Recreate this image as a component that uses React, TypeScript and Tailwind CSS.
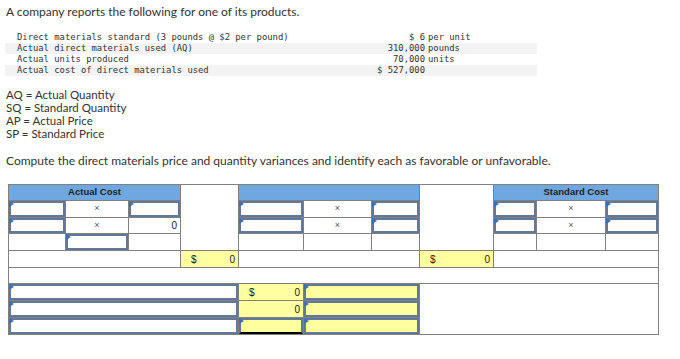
const BORDER = "border-r border-b border-[#808080]";

const Tri = () => (
  <span className="absolute left-0 top-0 w-0 h-0 border-t-[3px] border-b-[3px] border-l-[5px] border-t-transparent border-b-transparent border-l-[#3c6fb4]" />
);

const Input = ({ yellow = false, bottom = false }: { yellow?: boolean; bottom?: boolean }) => (
  <div className={`relative ${BORDER} ${yellow ? "bg-[#ffff9f]" : "bg-white"}`}>
    <div
      className={`absolute inset-0 border-2 border-[#62789a] ${bottom ? "border-b-black" : ""}`}
    />
    <Tri />
  </div>
);

const Cell = ({
  children,
  className = "",
}: {
  children?: React.ReactNode;
  className?: string;
}) => <div className={`${BORDER} flex items-center ${className}`}>{children}</div>;

const X = () => <Cell className="justify-center text-[9px] text-[#555]">×</Cell>;

const rows = [
  { label: "Direct materials standard (3 pounds @ $2 per pound)", value: "$ 6", unit: "per unit" },
  { label: "Actual direct materials used (AQ)", value: "310,000", unit: "pounds" },
  { label: "Actual units produced", value: "70,000", unit: "units" },
  { label: "Actual cost of direct materials used", value: "$ 527,000", unit: "" },
];

export default function App() {
  return (
    <div className="w-[680px] h-[359px] bg-white text-[#333] font-['Lato',sans-serif] overflow-hidden">
      <p className="pl-[6px] pt-[4px] text-[12px] leading-[15px]">
        A company reports the following for one of its products.
      </p>

      <div className="mt-[13px] ml-[5px] w-[532px] font-['DejaVu_Sans_Mono',monospace] text-[8.85px] text-[#333]">
        {rows.map((r, i) => (
          <div
            key={i}
            className={`flex h-[11px] items-center ${i % 2 === 1 ? "bg-[#f3f3f3]" : ""}`}
          >
            <span className="pl-[12px] w-[360px] whitespace-pre">{r.label}</span>
            <span className="w-[60px] text-right whitespace-pre">{r.value}</span>
            <span className="pl-[3px] whitespace-pre">{r.unit}</span>
          </div>
        ))}
      </div>

      <div className="mt-[12px] pl-[6px] text-[11.5px] leading-[13px]">
        <div>AQ = Actual Quantity</div>
        <div>SQ = Standard Quantity</div>
        <div>AP = Actual Price</div>
        <div>SP = Standard Price</div>
      </div>

      <p className="mt-[14px] pl-[6px] text-[12px] leading-[13px]">
        Compute the direct materials price and quantity variances and identify each as favorable or unfavorable.
      </p>

      <div className="ml-[8px] mt-[17px] grid grid-cols-[57px_63px_52px_58px_65px_68px_48px_74px_43px_69px_53px] grid-rows-[16px_17px_16px_17px_17px_16px_17px_17px_17px] border-l border-t border-[#808080] w-[651px] font-['Liberation_Sans',sans-serif] text-[9px] text-[#222]">
        {/* header */}
        <Cell className="col-span-3 justify-center bg-[#6fa8e0] font-bold text-[9.5px]">Actual Cost</Cell>
        <Cell className="row-span-4" />
        <Cell className="col-span-3 bg-[#6fa8e0]" />
        <Cell className="row-span-4" />
        <Cell className="col-span-3 justify-center bg-[#6fa8e0] font-bold text-[9.5px]">Standard Cost</Cell>

        {/* row 1 */}
        <Input />
        <X />
        <Input />
        <Input />
        <X />
        <Input />
        <Input />
        <X />
        <Input />

        {/* row 2 */}
        <Input />
        <X />
        <Cell className="justify-end pr-[3px] text-[10px]">0</Cell>
        <Input />
        <X />
        <Input />
        <Input />
        <X />
        <Input />

        {/* row 3 */}
        <Cell />
        <Input />
        <Cell />
        <Cell />
        <Cell />
        <Cell />
        <Cell />
        <Cell />
        <Cell />

        {/* totals */}
        <Cell className="col-span-3" />
        <Cell className="bg-[#ffff9f] justify-between pl-[10px] pr-[3px] text-[10px]">
          <span>$</span>
          <span>0</span>
        </Cell>
        <Cell className="col-span-3" />
        <Cell className="bg-[#ffff9f] justify-between pl-[10px] pr-[3px] text-[10px]">
          <span>$</span>
          <span>0</span>
        </Cell>
        <Cell className="col-span-3" />

        {/* spacer */}
        <Cell className="col-span-11" />

        {/* variance rows */}
        <div className="col-span-4 grid">
          <Input />
        </div>
        <Cell className="bg-[#ffff9f] justify-between pl-[10px] pr-[3px] text-[10px]">
          <span>$</span>
          <span>0</span>
        </Cell>
        <div className="col-span-2 grid">
          <Input yellow />
        </div>
        <Cell className="col-span-4 row-span-3" />

        <div className="col-span-4 grid">
          <Input />
        </div>
        <Cell className="bg-[#ffff9f] justify-end pr-[3px] text-[10px]">0</Cell>
        <div className="col-span-2 grid">
          <Input yellow />
        </div>

        <div className="col-span-4 grid">
          <Input />
        </div>
        <Input yellow bottom />
        <div className="col-span-2 grid">
          <Input yellow />
        </div>
      </div>
    </div>
  );
}
